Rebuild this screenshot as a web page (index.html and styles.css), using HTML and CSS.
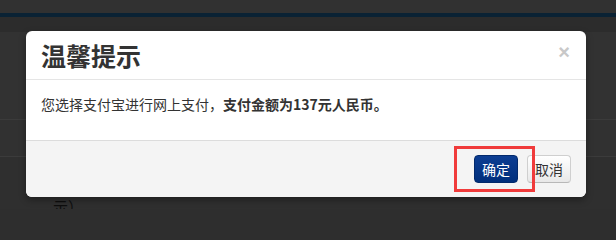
FILE: index.html
```html
<!DOCTYPE html>
<html lang="zh-CN">
<head>
<meta charset="utf-8">
<title>温馨提示</title>
<link rel="stylesheet" href="styles.css">
</head>
<body>
<div class="page">
  <div class="topbar"></div>
  <div class="stripe"></div>
  <div class="row row-a"></div>
  <div class="row row-b"></div>
  <div class="row row-c"></div>
  <div class="row row-d"><span class="bg-text">示）</span></div>
</div>

<div class="modal">
  <div class="modal-header">
    <h3 class="modal-title">温馨提示</h3>
    <span class="close">×</span>
  </div>
  <div class="modal-body">
    您选择支付宝进行网上支付，<b>支付金额为137元人民币。</b>
  </div>
  <div class="modal-footer">
    <button class="btn btn-primary">确定</button>
    <button class="btn btn-default">取消</button>
    <div class="highlight"></div>
  </div>
</div>
</body>
</html>
```

FILE: styles.css
```css
html {
  margin: 0;
  padding: 0;
  background: #2e2e2e;
}
body {
  margin: 0;
  padding: 0;
  width: 616px;
  height: 209px;
  overflow: hidden;
  background: #2e2e2e;
  font-family: "Noto Sans CJK SC", "Noto Sans", sans-serif;
  position: relative;
}
.page {
  display: flex;
  flex-direction: column;
}
.topbar {
  height: 13px;
  background: #313131;
}
.stripe {
  height: 4px;
  background: #0a2234;
}
.row {
  box-sizing: border-box;
}
.row-a {
  height: 15px;
  background: #2c2c2c;
}
.row-b {
  height: 88px;
  background: #323232;
  border-bottom: 1px solid #3b3b3b;
}
.row-c {
  height: 37px;
  background: #313131;
  border-bottom: 1px solid #3b3b3b;
}
.row-d {
  height: 52px;
  background: #2f2f2f;
  padding: 37px 0 0 53px;
}
.bg-text {
  font-size: 15px;
  line-height: 20px;
  color: #0e0e0e;
}

.modal {
  position: absolute;
  left: 26px;
  top: 31px;
  width: 560px;
  background: #fff;
  border-radius: 6px;
  box-shadow: 0 3px 7px rgba(0, 0, 0, 0.35);
  color: #333;
}
.modal-header {
  height: 48px;
  box-sizing: content-box;
  padding: 0 15px;
  border-bottom: 1px solid #e5e5e5;
  display: flex;
  align-items: center;
  justify-content: space-between;
}
.modal-title {
  margin: 0;
  font-size: 25px;
  line-height: 34px;
  font-weight: bold;
  color: #333;
}
.close {
  align-self: flex-start;
  margin-top: 11px;
  margin-right: 1px;
  font-family: "Liberation Sans", Arial, sans-serif;
  font-size: 20px;
  font-weight: bold;
  line-height: 20px;
  color: #c8c8c8;
}
.modal-body {
  height: 60px;
  box-sizing: border-box;
  padding: 14px 15px 0;
  font-size: 14px;
  line-height: 20px;
  color: #333;
}
.modal-body b {
  font-weight: bold;
}
.modal-footer {
  position: relative;
  background: #f4f4f4;
  border-top: 1px solid #dcdcdc;
  border-radius: 0 0 6px 6px;
  padding: 14px 15px 14px;
  display: flex;
  justify-content: flex-end;
  gap: 9px;
}
.btn {
  width: 44px;
  height: 28px;
  box-sizing: border-box;
  padding: 0;
  border-radius: 4px;
  font-family: "Noto Sans CJK SC", sans-serif;
  font-size: 14px;
  line-height: 26px;
  text-align: center;
}
.btn-primary {
  background: linear-gradient(#0c3d92, #002f7c);
  border: 1px solid #02296b;
  color: #fff;
}
.btn-default {
  background: linear-gradient(#ffffff, #e8e8e8);
  border: 1px solid #cfcfcf;
  border-bottom-color: #b8b8b8;
  color: #333;
}
.highlight {
  position: absolute;
  left: 428px;
  top: 5px;
  width: 81px;
  height: 46px;
  box-sizing: border-box;
  border: 3px solid #f03b3b;
}
```
